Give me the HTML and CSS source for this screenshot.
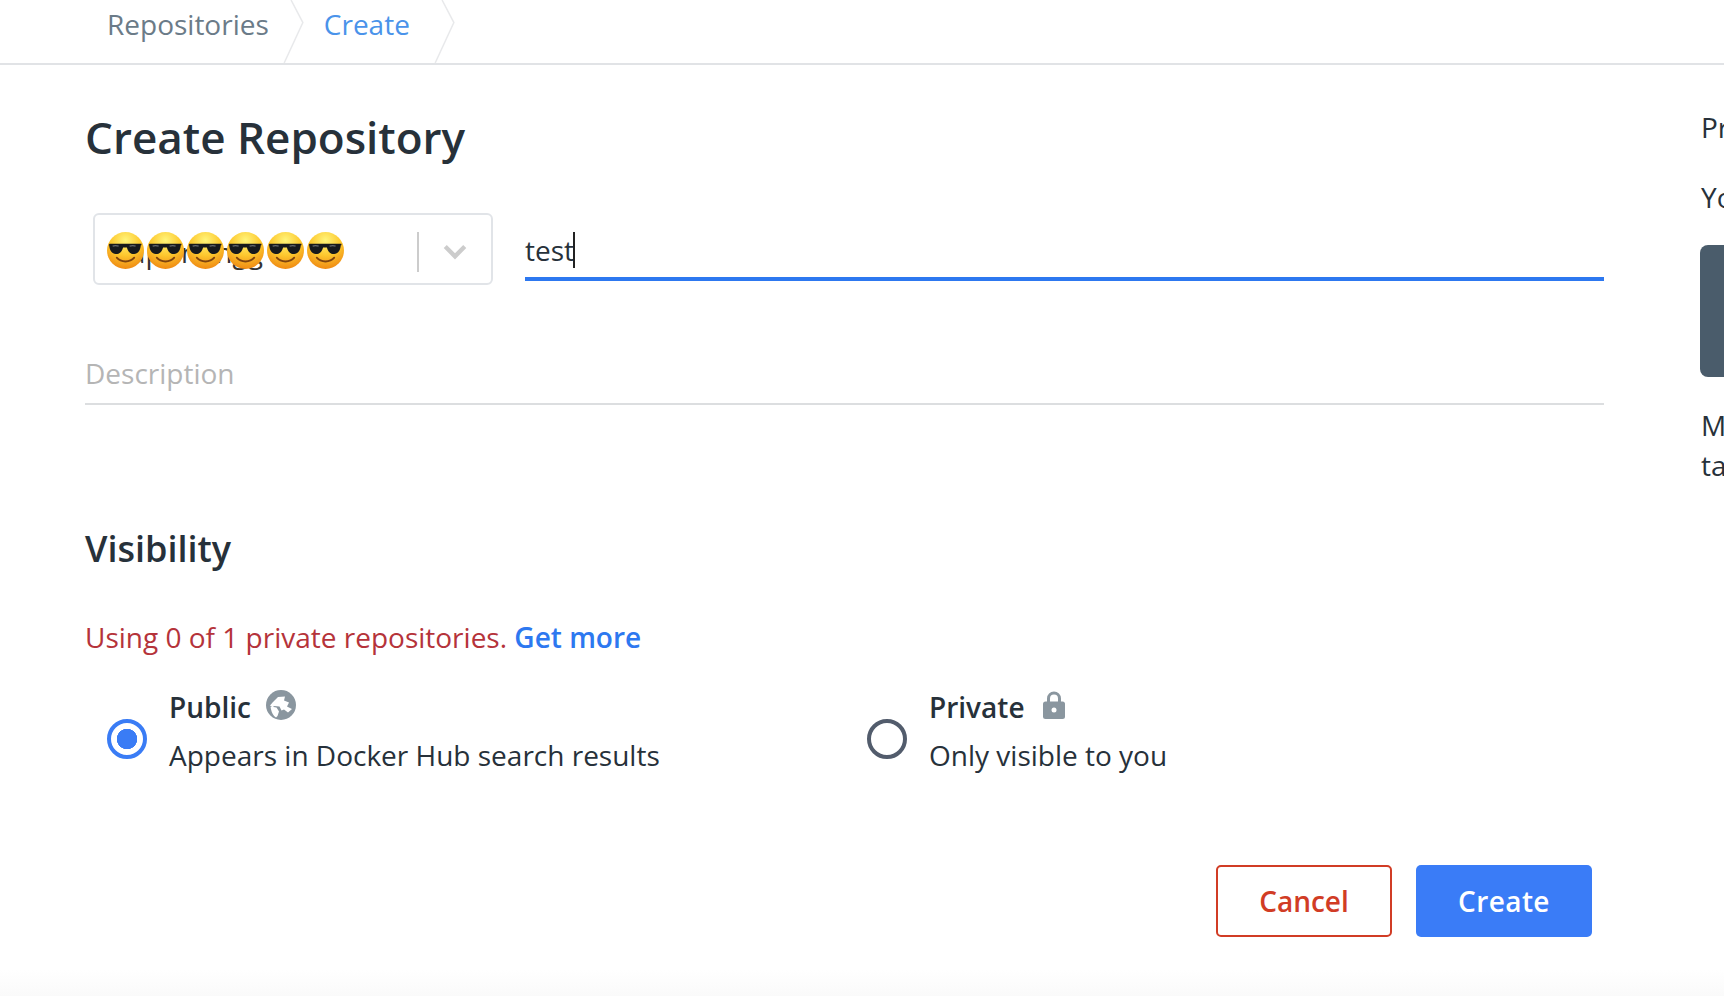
FILE: index.html
```html
<!DOCTYPE html>
<html lang="en">
<head>
<meta charset="utf-8">
<title>Create Repository</title>
<link rel="stylesheet" href="styles.css">
</head>
<body>
<svg class="defs" width="0" height="0" aria-hidden="true">
  <defs>
    <radialGradient id="face" cx="50%" cy="22%" r="82%">
      <stop offset="0" stop-color="#fff47a"/>
      <stop offset="0.5" stop-color="#fdc82e"/>
      <stop offset="1" stop-color="#ee8410"/>
    </radialGradient>
    <symbol id="cool" viewBox="0 0 36 36">
      <circle cx="18" cy="18" r="18" fill="url(#face)"/>
      <path d="M2.500 11.500h31v1.500h-.6c-.4 5-2.700 8.500-6.500 8.500-3.800 0-6.300-3-7-6.500h-3.800c-.7 3.500-3.200 6.500-7 6.500-3.800 0-6.100-3.500-6.500-8.500h-.6z" fill="#17191d"/>
      <path d="M5.500 13.800c1.600-.6 4-.6 5.800 0M22 13.800c1.800-.6 4.200-.6 5.800 0" stroke="#666a70" stroke-width="1.200" fill="none"/>
      <path d="M9.500 25c2.200 2.600 5 3.700 8.500 3.700s6.300-1.100 8.500-3.700" stroke="#7e420e" stroke-width="1.800" stroke-linecap="round" fill="none"/>
    </symbol>
  </defs>
</svg>

<header class="topbar">
  <nav class="crumbs">
    <a class="crumb">Repositories<svg class="chevron" viewBox="0 0 22 64"><path d="M1 64 20 23 8 0" /></svg></a>
    <a class="crumb crumb-active">Create<svg class="chevron chevron-last" viewBox="0 0 22 64"><path d="M1 64 20 23 8 0" /></svg></a>
  </nav>
</header>

<main class="page">
  <section class="form">
    <h1 class="title">Create Repository</h1>

    <div class="name-row">
      <div class="select">
        <div class="select-value">
          <span class="hidden-name">oaprintingg</span>
          <div class="emoji-row">
            <svg class="emoji"><use href="#cool"/></svg>
            <svg class="emoji"><use href="#cool"/></svg>
            <svg class="emoji"><use href="#cool"/></svg>
            <svg class="emoji"><use href="#cool"/></svg>
            <svg class="emoji"><use href="#cool"/></svg>
            <svg class="emoji"><use href="#cool"/></svg>
          </div>
        </div>
        <span class="select-sep"></span>
        <svg class="select-arrow" viewBox="0 0 24 16"><path d="M3 3l9 9 9-9" /></svg>
      </div>
      <div class="name-input"><span>test</span><i class="caret"></i></div>
    </div>

    <div class="description">Description</div>

    <h2 class="subtitle">Visibility</h2>
    <p class="usage">Using 0 of 1 private repositories. <a class="more">Get more</a></p>

    <div class="options">
      <div class="option option-public">
        <span class="radio radio-on"></span>
        <div>
          <div class="option-head">
            <b>Public</b>
            <svg class="globe" viewBox="0 0 30 30">
              <circle cx="15" cy="15" r="15" fill="#8a969f"/>
              <path d="M12 7l7-.5-1 4 5 2-2 4 5 2.500-4 3.500-4-3-2.500 1-2-4-5-.5-2 1-2.500-1.500 3-3.500zM4.500 16.500l6 1 2.500 4-1.500 4.500-1.500 1.500c-2.500-1.500-5-5.500-5.500-11.500z" fill="#fff"/>
            </svg>
          </div>
          <div class="option-desc">Appears in Docker Hub search results</div>
        </div>
      </div>
      <div class="option">
        <span class="radio"></span>
        <div>
          <div class="option-head">
            <b>Private</b>
            <svg class="lock" viewBox="0 0 22 28">
              <path d="M5.500 12V7.500a5.500 5.500 0 0 1 11 0V12" fill="none" stroke="#8a969f" stroke-width="3"/>
              <rect x="0" y="10.500" width="22" height="17.500" rx="2.500" fill="#8a969f"/>
              <circle cx="11" cy="19" r="2.500" fill="#fff"/>
            </svg>
          </div>
          <div class="option-desc">Only visible to you</div>
        </div>
      </div>
    </div>

    <div class="actions">
      <button class="btn btn-cancel">Cancel</button>
      <button class="btn btn-create">Create</button>
    </div>
  </section>

  <aside class="side">
    <h3 class="side-title">Pro tip</h3>
    <p class="side-text">You can push a new image to this repository using the CLI</p>
    <div class="code"></div>
    <p class="side-note">Make sure to change tagname with your desired image repository<br>tag.</p>
  </aside>
</main>
</body>
</html>
```

FILE: styles.css
```css
* { box-sizing: border-box; }

html, body {
  margin: 0;
  height: 996px;
  overflow: hidden;
}

body {
  background: linear-gradient(to bottom, #fff 0, #fff 970px, #fafafa 996px);
  font-family: "Open Sans", "Noto Sans", sans-serif;
  color: #27313a;
}

.defs { position: absolute; }

.topbar {
  height: 65px;
  border-bottom: 2px solid #e1e3e6;
  background: #fff;
}

.crumbs {
  display: flex;
  height: 63px;
  padding-left: 107px;
}

.crumb {
  display: flex;
  align-items: center;
  height: 48px;
  font-size: 28px;
  color: #6b7b88;
}

.crumb-active { color: #4a93ea; }

.chevron {
  width: 22px;
  height: 63px;
  margin-left: 14px;
  align-self: flex-start;
  fill: none;
  stroke: #e8e9eb;
  stroke-width: 1.500;
}

.chevron-last { margin-left: 24px; }

.crumb + .crumb { margin-left: 19px; }

.page {
  display: flex;
  gap: 97px;
  padding-left: 85px;
}

.form {
  flex: 0 0 1519px;
  min-width: 0;
}

.title {
  margin: 44px 0 0;
  font-size: 44px;
  line-height: 56px;
  font-weight: 600;
  color: #27313a;
}

.name-row {
  display: flex;
  align-items: flex-start;
  gap: 32px;
  margin-top: 48px;
  padding-left: 8px;
}

.select {
  display: flex;
  align-items: center;
  width: 400px;
  height: 72px;
  flex: none;
  padding-top: 5px;
  border: 2px solid #e1e4e8;
  border-radius: 6px;
  background: #fff;
}

.select-value {
  position: relative;
  flex: 1;
  height: 100%;
  display: flex;
  align-items: center;
  padding: 1px 0 0 18px;
}

.hidden-name {
  font-size: 28px;
  color: #333;
}

.emoji-row {
  position: absolute;
  left: 12px;
  top: 12px;
  display: flex;
  gap: 3px;
}

.emoji {
  width: 37px;
  height: 37px;
  display: block;
}

.select-sep {
  width: 2px;
  height: 40px;
  margin-left: -1px;
  background: #ccc;
}

.select-arrow {
  width: 26px;
  height: 18px;
  margin: 0 23px 0 23px;
  fill: none;
  stroke: #ccc;
  stroke-width: 4;
}

.name-input {
  flex: 1;
  display: flex;
  align-items: center;
  height: 68px;
  padding-top: 9px;
  border-bottom: 4px solid #2d78f0;
  font-size: 28px;
  color: #27313a;
}

.caret {
  width: 2px;
  height: 36px;
  margin-left: -1px;
  background: #222;
}

.description {
  display: flex;
  align-items: center;
  height: 48px;
  margin-top: 72px;
  padding-bottom: 14px;
  border-bottom: 2px solid #dcdee0;
  font-size: 28px;
  color: #b5b5b5;
}

.subtitle {
  margin: 121px 0 0;
  font-size: 36px;
  line-height: 46px;
  font-weight: 600;
  color: #27313a;
}

.usage {
  margin: 45px 0 0;
  font-size: 28px;
  line-height: 40px;
  color: #b5333a;
}

.more {
  font-weight: 600;
  color: #2d78f0;
}

.options {
  display: flex;
  margin-top: 26px;
  padding-left: 22px;
}

.option {
  display: flex;
  align-items: center;
  gap: 22px;
}

.option-public { width: 760px; }

.radio {
  width: 40px;
  height: 40px;
  flex: none;
  margin-top: 15px;
  border: 4px solid #525c6c;
  border-radius: 50%;
  background: #fff;
}

.radio-on {
  border-color: #3a7cf5;
  background: radial-gradient(circle, #3a7cf5 0 10px, #fff 10.500px);
}

.option-head {
  display: flex;
  align-items: center;
  height: 48px;
  gap: 14px;
  font-size: 28px;
}

.option-head b {
  font-weight: 600;
  color: #27313a;
}

.globe {
  width: 30px;
  height: 30px;
  margin-top: -4px;
  margin-left: 1px;
}

.lock {
  width: 22px;
  height: 28px;
  margin-top: -5px;
  margin-left: 4px;
}

.option-desc {
  font-size: 28px;
  line-height: 48px;
  color: #27313a;
}

.actions {
  display: flex;
  justify-content: flex-end;
  gap: 24px;
  margin-top: 86px;
  padding-right: 12px;
}

.btn {
  width: 176px;
  height: 72px;
  border-radius: 5px;
  font-family: inherit;
  font-size: 28px;
  font-weight: 600;
}

.btn-cancel {
  border: 2px solid #d13c25;
  background: #fff;
  color: #d13c25;
}

.btn-create {
  border: 0;
  background: #3a7cf7;
  color: #fff;
  letter-spacing: 0.4px;
}

.side {
  flex: none;
  width: 360px;
}

.side-title {
  margin: 40px 0 0;
  font-size: 28px;
  line-height: 44px;
  font-weight: 400;
  color: #27313a;
}

.side-text {
  margin: 28px 0 0;
  font-size: 28px;
  line-height: 40px;
  white-space: nowrap;
}

.code {
  height: 132px;
  margin: 28px 0 0 -1px;
  border-radius: 8px;
  background: #4a5c6b;
}

.side-note {
  margin: 28px 0 0;
  font-size: 28px;
  line-height: 40px;
  white-space: nowrap;
}
```
